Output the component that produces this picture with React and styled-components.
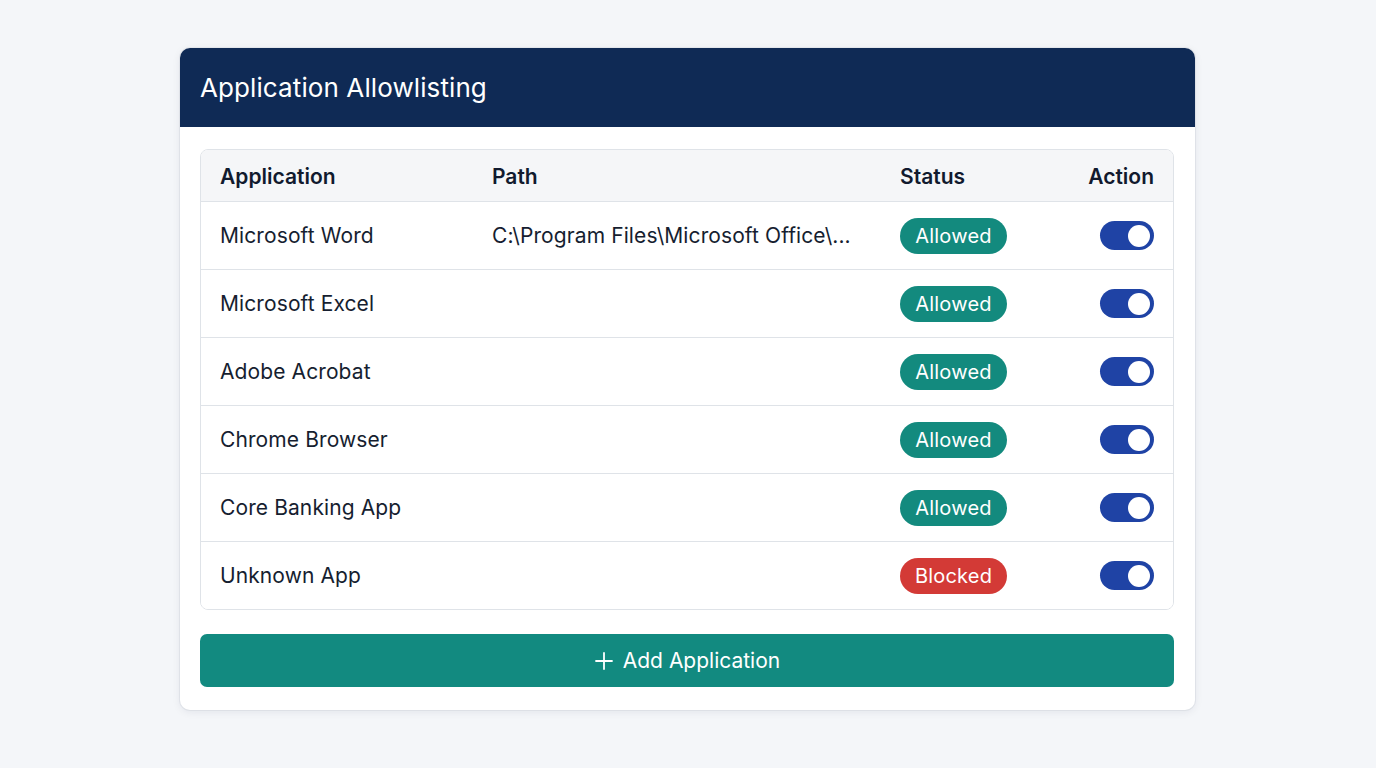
import styled, { createGlobalStyle } from "styled-components";

const GlobalStyle = createGlobalStyle`
  html, body {
    margin: 0;
    padding: 0;
    background: #f4f6f9;
    font-family: Inter, "Noto Sans", "Liberation Sans", sans-serif;
  }
`;

const Page = styled.div`
  min-height: 768px;
  display: flex;
  justify-content: center;
  padding: 48px 1px 0 0;
  box-sizing: border-box;
`;

const Card = styled.div`
  width: 1015px;
  height: 662px;
  background: #ffffff;
  border-radius: 10px;
  box-shadow: 0 2px 8px rgba(15, 30, 60, 0.08), 0 0 0 1px rgba(15, 30, 60, 0.05);
  overflow: hidden;
  display: flex;
  flex-direction: column;
`;

const Header = styled.div`
  height: 79px;
  background: #0f2a55;
  display: flex;
  align-items: center;
  padding: 0 20px;
`;

const Title = styled.h1`
  margin: 0;
  color: #ffffff;
  font-size: 26px;
  font-weight: 400;
  letter-spacing: 0.1px;
`;

const Body = styled.div`
  padding: 22px 21px 23px 20px;
  display: flex;
  flex-direction: column;
  gap: 24px;
`;

const Table = styled.div`
  border: 1px solid #dfe3e8;
  border-radius: 8px;
  overflow: hidden;
`;

const Row = styled.div`
  display: grid;
  grid-template-columns: 272px 408px 1fr auto;
  align-items: center;
  padding: 0 19px 0 19px;
  height: ${(p) => (p.$head ? "51px" : "67px")};
  background: ${(p) => (p.$head ? "#f5f6f8" : "#ffffff")};
  border-top: ${(p) => (p.$first ? "none" : "1px solid #dfe3e8")};
`;

const HeadCell = styled.div`
  font-size: 21px;
  font-weight: 600;
  color: #111a2e;
  padding-top: 2px;
  text-align: ${(p) => (p.$right ? "right" : "left")};
`;

const Cell = styled.div`
  font-size: 21px;
  color: #161e30;
  white-space: nowrap;
  letter-spacing: 0.1px;
`;

const Pill = styled.span`
  display: inline-flex;
  align-items: center;
  justify-content: center;
  width: 107px;
  height: 36px;
  border-radius: 18px;
  color: #ffffff;
  font-size: 20px;
  letter-spacing: 0.2px;
  background: ${(p) => (p.$blocked ? "#d33a36" : "#138a7e")};
`;

const Toggle = styled.span`
  display: inline-flex;
  align-items: center;
  justify-content: flex-end;
  width: 54px;
  height: 29px;
  border-radius: 15px;
  background: #1f43a5;
  padding: 0 4px;
  box-sizing: border-box;
`;

const Knob = styled.span`
  width: 22px;
  height: 22px;
  border-radius: 50%;
  background: #ffffff;
`;

const AddButton = styled.button`
  height: 53px;
  border: none;
  border-radius: 7px;
  background: #128a80;
  color: #ffffff;
  font-family: inherit;
  font-size: 21px;
  display: flex;
  align-items: center;
  justify-content: center;
  gap: 9px;
  cursor: pointer;
`;

const apps = [
  { name: "Microsoft Word", path: "C:\\Program Files\\Microsoft Office\\...", status: "Allowed" },
  { name: "Microsoft Excel", path: "", status: "Allowed" },
  { name: "Adobe Acrobat", path: "", status: "Allowed" },
  { name: "Chrome Browser", path: "", status: "Allowed" },
  { name: "Core Banking App", path: "", status: "Allowed" },
  { name: "Unknown App", path: "", status: "Blocked" },
];

const App = () => {
  return (
    <Page>
      <GlobalStyle />
      <Card>
        <Header>
          <Title>Application Allowlisting</Title>
        </Header>
        <Body>
          <Table>
            <Row $head $first>
              <HeadCell>Application</HeadCell>
              <HeadCell>Path</HeadCell>
              <HeadCell>Status</HeadCell>
              <HeadCell $right>Action</HeadCell>
            </Row>
            {apps.map((a) => (
              <Row key={a.name}>
                <Cell>{a.name}</Cell>
                <Cell>{a.path}</Cell>
                <div>
                  <Pill $blocked={a.status === "Blocked"}>{a.status}</Pill>
                </div>
                <Toggle>
                  <Knob />
                </Toggle>
              </Row>
            ))}
          </Table>
          <AddButton>
            <svg width="20" height="20" viewBox="0 0 20 20" fill="none" stroke="#fff" strokeWidth="1.8" strokeLinecap="round">
              <path d="M10 2v16M2 10h16" />
            </svg>
            Add Application
          </AddButton>
        </Body>
      </Card>
    </Page>
  );
};

export default App;
